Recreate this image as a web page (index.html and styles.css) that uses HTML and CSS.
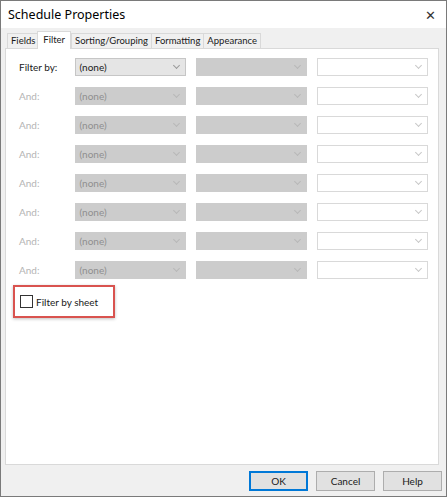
FILE: index.html
```html
<!DOCTYPE html>
<html lang="en">
<head>
    <meta charset="UTF-8">
    <title>Schedule Properties</title>
    <link rel="stylesheet" href="styles.css">
</head>
<body>
    <div class="window">
        <div class="titlebar">
            <span class="title">Schedule Properties</span>
            <span class="close">&#x2715;</span>
        </div>
        <div class="dialog">
            <div class="tabs">
                <div class="tab">Fields</div>
                <div class="tab active">Filter</div>
                <div class="tab">Sorting/Grouping</div>
                <div class="tab">Formatting</div>
                <div class="tab">Appearance</div>
            </div>
            <div class="panel">
                <div class="row">
                    <span class="label">Filter by:</span>
                    <div class="combo enabled"><span>(none)</span><i class="chev"></i></div>
                    <div class="combo disabled"><span></span><i class="chev"></i></div>
                    <div class="combo blank"><span></span><i class="chev"></i></div>
                </div>
                <div class="row off">
                    <span class="label">And:</span>
                    <div class="combo disabled"><span>(none)</span><i class="chev"></i></div>
                    <div class="combo disabled"><span></span><i class="chev"></i></div>
                    <div class="combo blank"><span></span><i class="chev"></i></div>
                </div>
                <div class="row off">
                    <span class="label">And:</span>
                    <div class="combo disabled"><span>(none)</span><i class="chev"></i></div>
                    <div class="combo disabled"><span></span><i class="chev"></i></div>
                    <div class="combo blank"><span></span><i class="chev"></i></div>
                </div>
                <div class="row off">
                    <span class="label">And:</span>
                    <div class="combo disabled"><span>(none)</span><i class="chev"></i></div>
                    <div class="combo disabled"><span></span><i class="chev"></i></div>
                    <div class="combo blank"><span></span><i class="chev"></i></div>
                </div>
                <div class="row off">
                    <span class="label">And:</span>
                    <div class="combo disabled"><span>(none)</span><i class="chev"></i></div>
                    <div class="combo disabled"><span></span><i class="chev"></i></div>
                    <div class="combo blank"><span></span><i class="chev"></i></div>
                </div>
                <div class="row off">
                    <span class="label">And:</span>
                    <div class="combo disabled"><span>(none)</span><i class="chev"></i></div>
                    <div class="combo disabled"><span></span><i class="chev"></i></div>
                    <div class="combo blank"><span></span><i class="chev"></i></div>
                </div>
                <div class="row off">
                    <span class="label">And:</span>
                    <div class="combo disabled"><span>(none)</span><i class="chev"></i></div>
                    <div class="combo disabled"><span></span><i class="chev"></i></div>
                    <div class="combo blank"><span></span><i class="chev"></i></div>
                </div>
                <div class="row off">
                    <span class="label">And:</span>
                    <div class="combo disabled"><span>(none)</span><i class="chev"></i></div>
                    <div class="combo disabled"><span></span><i class="chev"></i></div>
                    <div class="combo blank"><span></span><i class="chev"></i></div>
                </div>
                <div class="sheet-filter">
                    <label class="check"><span class="box"></span>Filter by sheet</label>
                </div>
            </div>
            <div class="footer">
                <button class="btn default">OK</button>
                <button class="btn">Cancel</button>
                <button class="btn">Help</button>
            </div>
        </div>
    </div>
</body>
</html>
```

FILE: styles.css
```css
body {
    margin: 0;
    font-family: Lato, "Noto Sans", sans-serif;
    font-size: 10px;
    color: #1a1a1a;
    background: #fff;
}
.window {
    width: 445px;
    height: 495px;
    border: 1px solid #7a7a7a;
    display: flex;
    flex-direction: column;
    background: #f0f0f0;
}
.titlebar {
    height: 27px;
    background: #fff;
    display: flex;
    align-items: center;
    justify-content: space-between;
    padding: 0 10px 0 7px;
}
.title {
    font-family: "Noto Sans", sans-serif;
    font-size: 12.5px;
    color: #000;
}
.close {
    font-family: "Noto Sans", sans-serif;
    font-size: 13px;
    color: #333;
}
.dialog {
    flex: 1;
    display: flex;
    flex-direction: column;
    padding: 5px 4px 0 4px;
}
.tabs {
    display: flex;
    height: 15px;
    padding-left: 2px;
    align-items: flex-end;
}
.tab {
    height: 14px;
    line-height: 13px;
    padding: 0 3px;
    border: 1px solid #d9d9d9;
    border-bottom: none;
    margin-right: -1px;
    background: #f0f0f0;
    font-size: 9.5px;
}
.tab.active {
    height: 17px;
    line-height: 15px;
    background: #fff;
    margin: 0 0 -1px -1px;
    padding: 0 5px;
    position: relative;
    z-index: 1;
}
.panel {
    width: 434px;
    height: 417px;
    background: #fff;
    border: 1px solid #d9d9d9;
    padding-top: 9px;
    box-sizing: border-box;
}
.row {
    display: flex;
    align-items: center;
    height: 18px;
    margin-bottom: 11px;
    padding-left: 13px;
}
.label {
    width: 56px;
    color: #1a1a1a;
}
.row.off .label {
    color: #b4b4b4;
}
.combo {
    width: 112px;
    height: 18px;
    box-sizing: border-box;
    display: flex;
    align-items: center;
    justify-content: space-between;
    padding: 0 6px 0 4px;
    margin-right: 10px;
}
.combo.enabled {
    background: #e5e5e5;
    border: 1px solid #c6c6c6;
}
.combo.disabled {
    background: #cccccc;
    border: 1px solid #cccccc;
    color: #8f8f8f;
}
.combo.blank {
    background: #fff;
    border: 1px solid #d9d9d9;
}
.chev {
    width: 4px;
    height: 4px;
    border-right: 1px solid #9a9a9a;
    border-bottom: 1px solid #9a9a9a;
    transform: rotate(45deg);
    margin-top: -3px;
}
.combo.disabled .chev {
    border-color: #b8b8b8;
}
.combo.blank .chev {
    border-color: #c8c8c8;
}
.sheet-filter {
    margin: -5px 0 0 7px;
    width: 102px;
    height: 33px;
    box-sizing: border-box;
    border: 2px solid #d9534f;
    box-shadow: 0 1px 3px rgba(0, 0, 0, 0.25);
    display: flex;
    align-items: center;
    padding-left: 5px;
}
.check {
    display: flex;
    align-items: center;
    color: #1a1a1a;
}
.box {
    width: 11px;
    height: 11px;
    border: 1px solid #333;
    background: #fff;
    margin-right: 3px;
}
.footer {
    display: flex;
    justify-content: flex-end;
    gap: 8px;
    padding: 6px 0 0 0;
}
.btn {
    width: 59px;
    height: 20px;
    font-family: inherit;
    font-size: 10px;
    background: #e1e1e1;
    border: 1px solid #adadad;
    color: #1a1a1a;
    padding: 0;
}
.btn.default {
    border: 1px solid #0078d7;
    box-shadow: inset 0 0 0 1px #0078d7;
}
```
